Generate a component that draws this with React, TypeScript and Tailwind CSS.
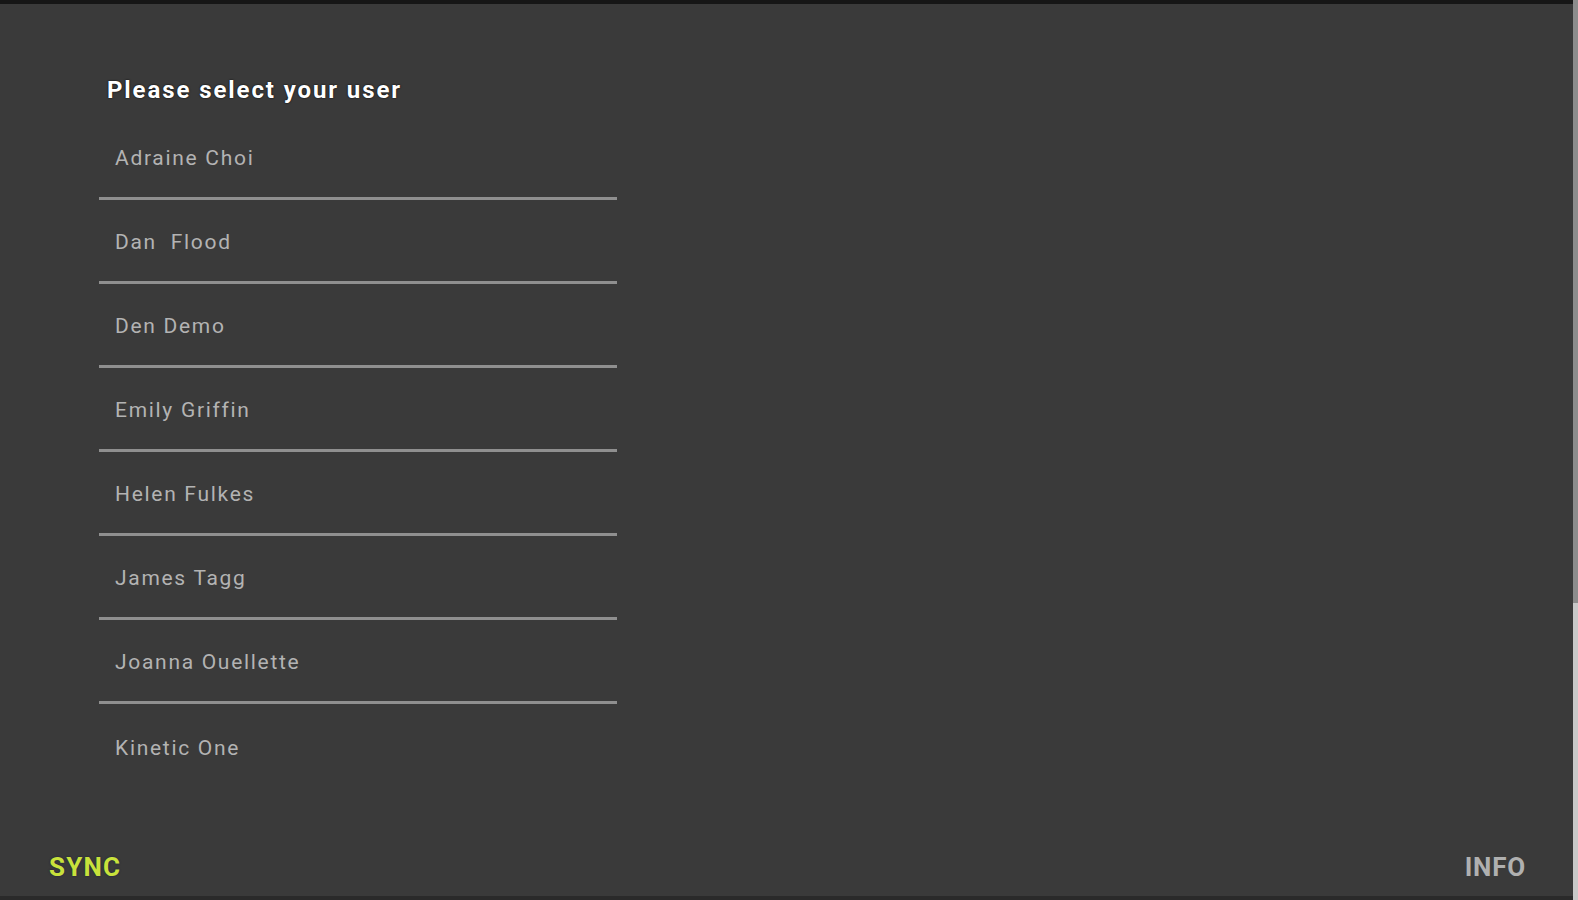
const users = [
  'Adraine Choi',
  'Dan  Flood',
  'Den Demo',
  'Emily Griffin',
  'Helen Fulkes',
  'James Tagg',
  'Joanna Ouellette',
  'Kinetic One',
]

export default function App() {
  return (
    <div className="flex h-[900px] w-[1578px] overflow-hidden bg-[#3a3a3a] font-['Roboto',sans-serif]">
      <div className="flex flex-1 flex-col border-t-4 border-b-4 border-t-[#161616] border-b-[#2a2a2a]">
        <main className="flex-1 pl-[99px] pt-[70px]">
          <h1 className="pl-2 text-[24px] leading-8 font-bold tracking-[1.9px] text-white [text-shadow:0_0_2px_#000]">
            Please select your user
          </h1>
          <ul className="mt-[10px] w-[518px]">
            {users.map((name, i) => (
              <li
                key={name}
                className={
                  i < users.length - 1
                    ? 'flex h-[84px] items-center border-b-[3px] border-[#8f8f8f] pl-4 pt-[5px] text-[21px] tracking-[1.7px] whitespace-pre text-[#b3b3b3]'
                    : 'flex h-[84px] items-center pl-4 pt-[5px] text-[21px] tracking-[1.7px] whitespace-pre text-[#b3b3b3]'
                }
              >
                {name}
              </li>
            ))}
          </ul>
        </main>
        <footer className="flex h-[54px] items-center justify-between pb-[4px] pl-[49px] pr-[47px]">
          <button className="text-[26px] font-bold tracking-[1.2px] text-[#c9e23b] [text-shadow:0_0_2px_#1a1a40]">SYNC</button>
          <button className="text-[26px] font-bold tracking-[0.8px] text-[#b0b0b0]">INFO</button>
        </footer>
      </div>
      {/* window edge */}
      <div className="flex w-[5px] flex-col">
        <div className="h-[603px] bg-[#8c8c8c]" />
        <div className="flex-1 bg-[#c8c8c8]" />
      </div>
    </div>
  )
}
